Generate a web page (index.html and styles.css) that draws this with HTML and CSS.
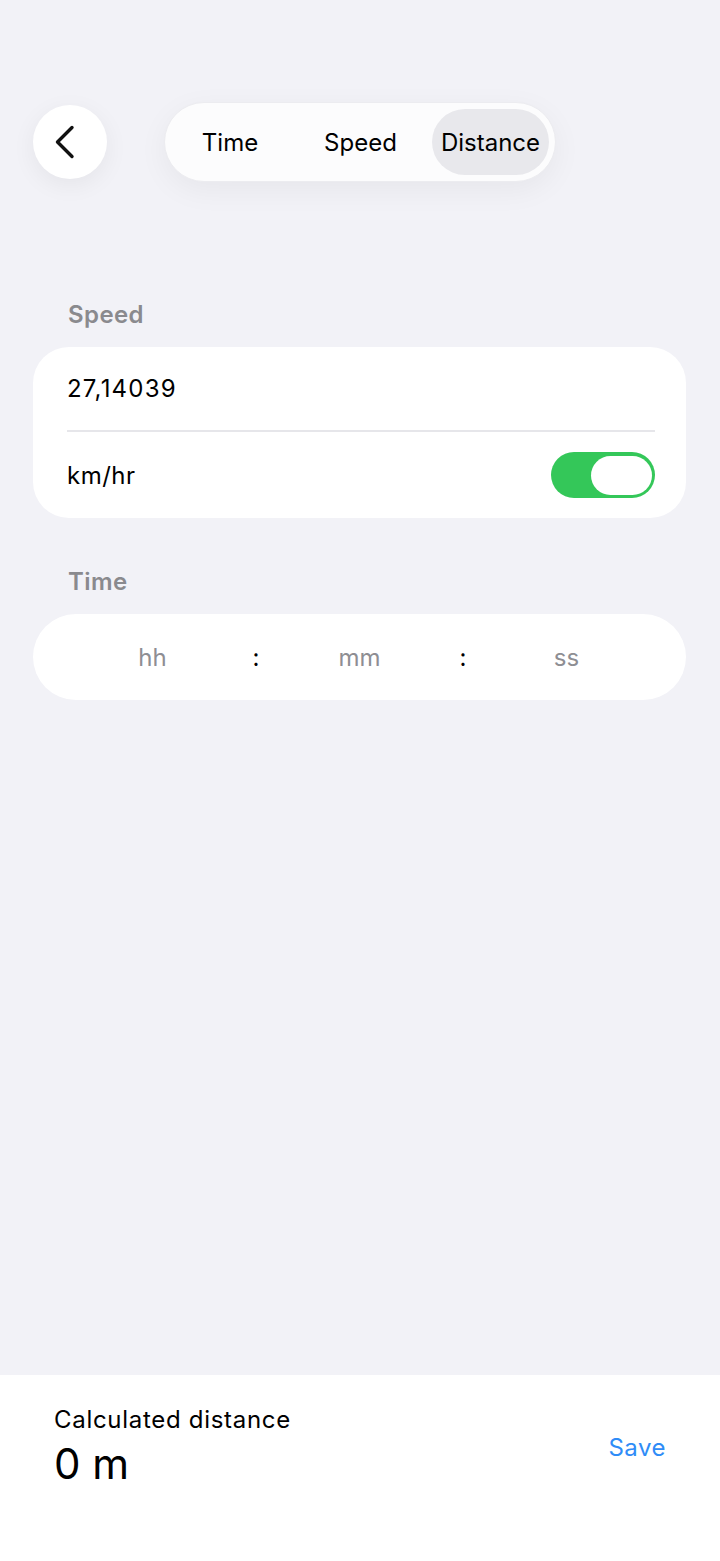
FILE: index.html
```html
<!DOCTYPE html>
<html lang="en">
<head>
  <meta charset="UTF-8" />
  <title>Distance</title>
  <link rel="stylesheet" href="styles.css">
</head>
<body>
  <div class="screen">
    <div class="topbar">
      <button class="back" aria-label="Back">
        <svg width="74" height="74" viewBox="0 0 74 74"><path d="M39 22.5 L24.5 37 L39 51.5" fill="none" stroke="#111" stroke-width="3.4" stroke-linecap="round" stroke-linejoin="round"/></svg>
      </button>
      <div class="segments">
        <span class="seg seg-time">Time</span>
        <span class="seg seg-speed">Speed</span>
        <span class="seg seg-distance active">Distance</span>
      </div>
    </div>

    <div class="section-label">Speed</div>
    <div class="card">
      <div class="row value">27,14039</div>
      <div class="divider"></div>
      <div class="row unit">
        <span>km/hr</span>
        <span class="toggle"><span class="knob"></span></span>
      </div>
    </div>

    <div class="section-label">Time</div>
    <div class="time-card">
      <span class="ph">hh</span>
      <span class="colon">:</span>
      <span class="ph">mm</span>
      <span class="colon">:</span>
      <span class="ph">ss</span>
    </div>
  </div>

  <div class="result">
    <div class="result-text">
      <div class="result-label">Calculated distance</div>
      <div class="result-value">0 m</div>
    </div>
    <a class="save">Save</a>
  </div>
</body>
</html>
```

FILE: styles.css
```css
body {
  margin: 0;
  background: #f2f2f7;
  font-family: 'Inter', 'Liberation Sans', sans-serif;
  color: #000;
  height: 1561px;
  display: flex;
  flex-direction: column;
}

.screen {
  flex: 1;
  padding: 102px 34px 0 33px;
}

.topbar {
  display: flex;
  align-items: center;
  gap: 57px;
  height: 80px;
}

.back {
  width: 74px;
  height: 74px;
  border-radius: 50%;
  border: none;
  background: #fff;
  padding: 0;
  box-shadow: 0 6px 24px rgba(0, 0, 0, 0.06);
}

.back svg {
  display: block;
}

.segments {
  display: flex;
  align-items: center;
  height: 80px;
  width: 392px;
  box-sizing: border-box;
  padding: 6px;
  border-radius: 40px;
  background: #fcfcfd;
  border: 1px solid #ececf0;
  box-shadow: 0 8px 30px rgba(0, 0, 0, 0.05);
}

.seg {
  height: 66px;
  display: flex;
  align-items: center;
  justify-content: center;
  font-size: 24px;
  border-radius: 33px;
}

.seg-time {
  width: 118px;
}

.seg-speed {
  width: 143px;
}

.seg-distance {
  width: 117px;
}

.seg.active {
  background: #e8e8ec;
}

.section-label {
  color: #8a8a8e;
  font-size: 24px;
  font-weight: 600;
  letter-spacing: 0.4px;
  padding-left: 35px;
  line-height: 29px;
}

.topbar + .section-label {
  margin-top: 118px;
}

.card + .section-label {
  margin-top: 49px;
}

.card {
  background: #fff;
  border-radius: 36px;
  margin-top: 18px;
  padding: 0 31px 0 34px;
}

.row {
  font-size: 24px;
  letter-spacing: 0.5px;
  display: flex;
  align-items: center;
}

.row.value {
  height: 83px;
  letter-spacing: 1.2px;
}

.divider {
  height: 2px;
  background: #e6e6ea;
}

.row.unit {
  height: 86px;
  justify-content: space-between;
}

.toggle {
  width: 104px;
  height: 46px;
  border-radius: 23px;
  background: #34c759;
  display: flex;
  align-items: center;
  justify-content: flex-end;
  padding: 0 3px;
  box-sizing: border-box;
}

.knob {
  width: 61px;
  height: 39px;
  border-radius: 20px;
  background: #fff;
}

.time-card {
  background: #fff;
  border-radius: 43px;
  height: 86px;
  margin-top: 18px;
  display: grid;
  grid-template-columns: repeat(5, 103.5px);
  justify-content: center;
  align-items: center;
  font-size: 24px;
}

.time-card span {
  text-align: center;
}

.ph {
  color: #8e8e93;
}

.colon {
  color: #000;
}

.result {
  height: 186px;
  background: #fff;
  display: flex;
  justify-content: space-between;
  align-items: flex-start;
  padding: 30px 54px 0;
  box-sizing: border-box;
}

.result-label {
  font-size: 24px;
  letter-spacing: 0.7px;
  line-height: 29px;
}

.result-value {
  font-size: 42px;
  line-height: 51px;
  margin-top: 4px;
}

.save {
  color: #2f8cf7;
  font-size: 24px;
  letter-spacing: 0.5px;
  line-height: 29px;
  margin-top: 28px;
}
```
